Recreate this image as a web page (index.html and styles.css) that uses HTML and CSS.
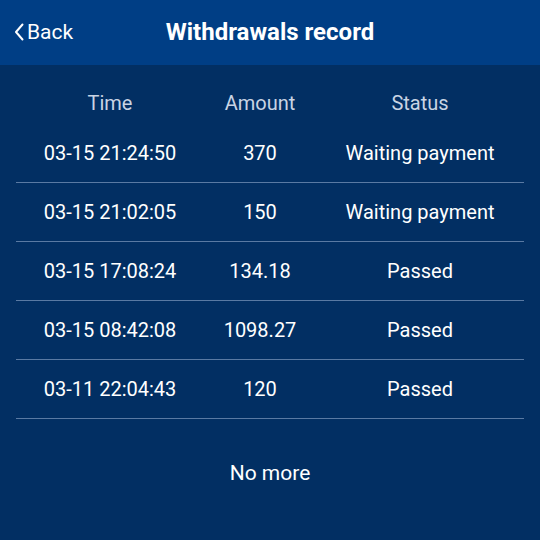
FILE: index.html
```html
<!DOCTYPE html>
<html>
<head>
<meta charset="utf-8">
<link rel="stylesheet" href="styles.css">
</head>
<body>
<div class="page">
  <header class="topbar">
    <div class="back">
      <svg class="chev" width="10" height="18" viewBox="0 0 10 18"><path d="M8.5 1.5 L2 9 L8.5 16.5" fill="none" stroke="#fff" stroke-width="2" stroke-linecap="round" stroke-linejoin="round"/></svg>
      <span>Back</span>
    </div>
    <h1 class="title">Withdrawals record</h1>
  </header>
  <main class="list">
    <div class="row head">
      <div>Time</div><div>Amount</div><div>Status</div>
    </div>
    <div class="row item"><div>03-15 21:24:50</div><div>370</div><div>Waiting payment</div></div>
    <div class="row item"><div>03-15 21:02:05</div><div>150</div><div>Waiting payment</div></div>
    <div class="row item"><div>03-15 17:08:24</div><div>134.18</div><div>Passed</div></div>
    <div class="row item"><div>03-15 08:42:08</div><div>1098.27</div><div>Passed</div></div>
    <div class="row item"><div>03-11 22:04:43</div><div>120</div><div>Passed</div></div>
    <div class="nomore">No more</div>
  </main>
</div>
</body>
</html>
```
FILE: styles.css
```css
html, body {
  margin: 0;
  padding: 0;
  background: #022f63;
  font-family: Roboto, "Liberation Sans", sans-serif;
  color: #fff;
}
.page {
  width: 540px;
  height: 540px;
  display: flex;
  flex-direction: column;
}
.topbar {
  height: 65px;
  background: #003e85;
  position: relative;
  display: flex;
  align-items: center;
  justify-content: center;
  flex-shrink: 0;
}
.back {
  position: absolute;
  left: 14px;
  top: 21px;
  display: flex;
  align-items: center;
  gap: 3px;
  font-size: 21px;
  line-height: 22px;
}
.chev { display: block; }
.title {
  margin: 0;
  font-size: 24px;
  font-weight: 700;
  line-height: 26px;
  margin-top: -2px;
}
.list {
  padding: 0 16px;
  display: flex;
  flex-direction: column;
}
.row {
  display: grid;
  grid-template-columns: 188px 112px 208px;
  text-align: center;
  font-size: 20px;
  line-height: 24px;
}
.head {
  color: #c9d4e4;
  padding-top: 26px;
  padding-bottom: 9px;
}
.item {
  height: 58px;
  align-items: center;
  border-bottom: 1px solid #5a7aa3;
}
.nomore {
  text-align: center;
  font-size: 21px;
  line-height: 24px;
  padding-top: 42px;
}
```
